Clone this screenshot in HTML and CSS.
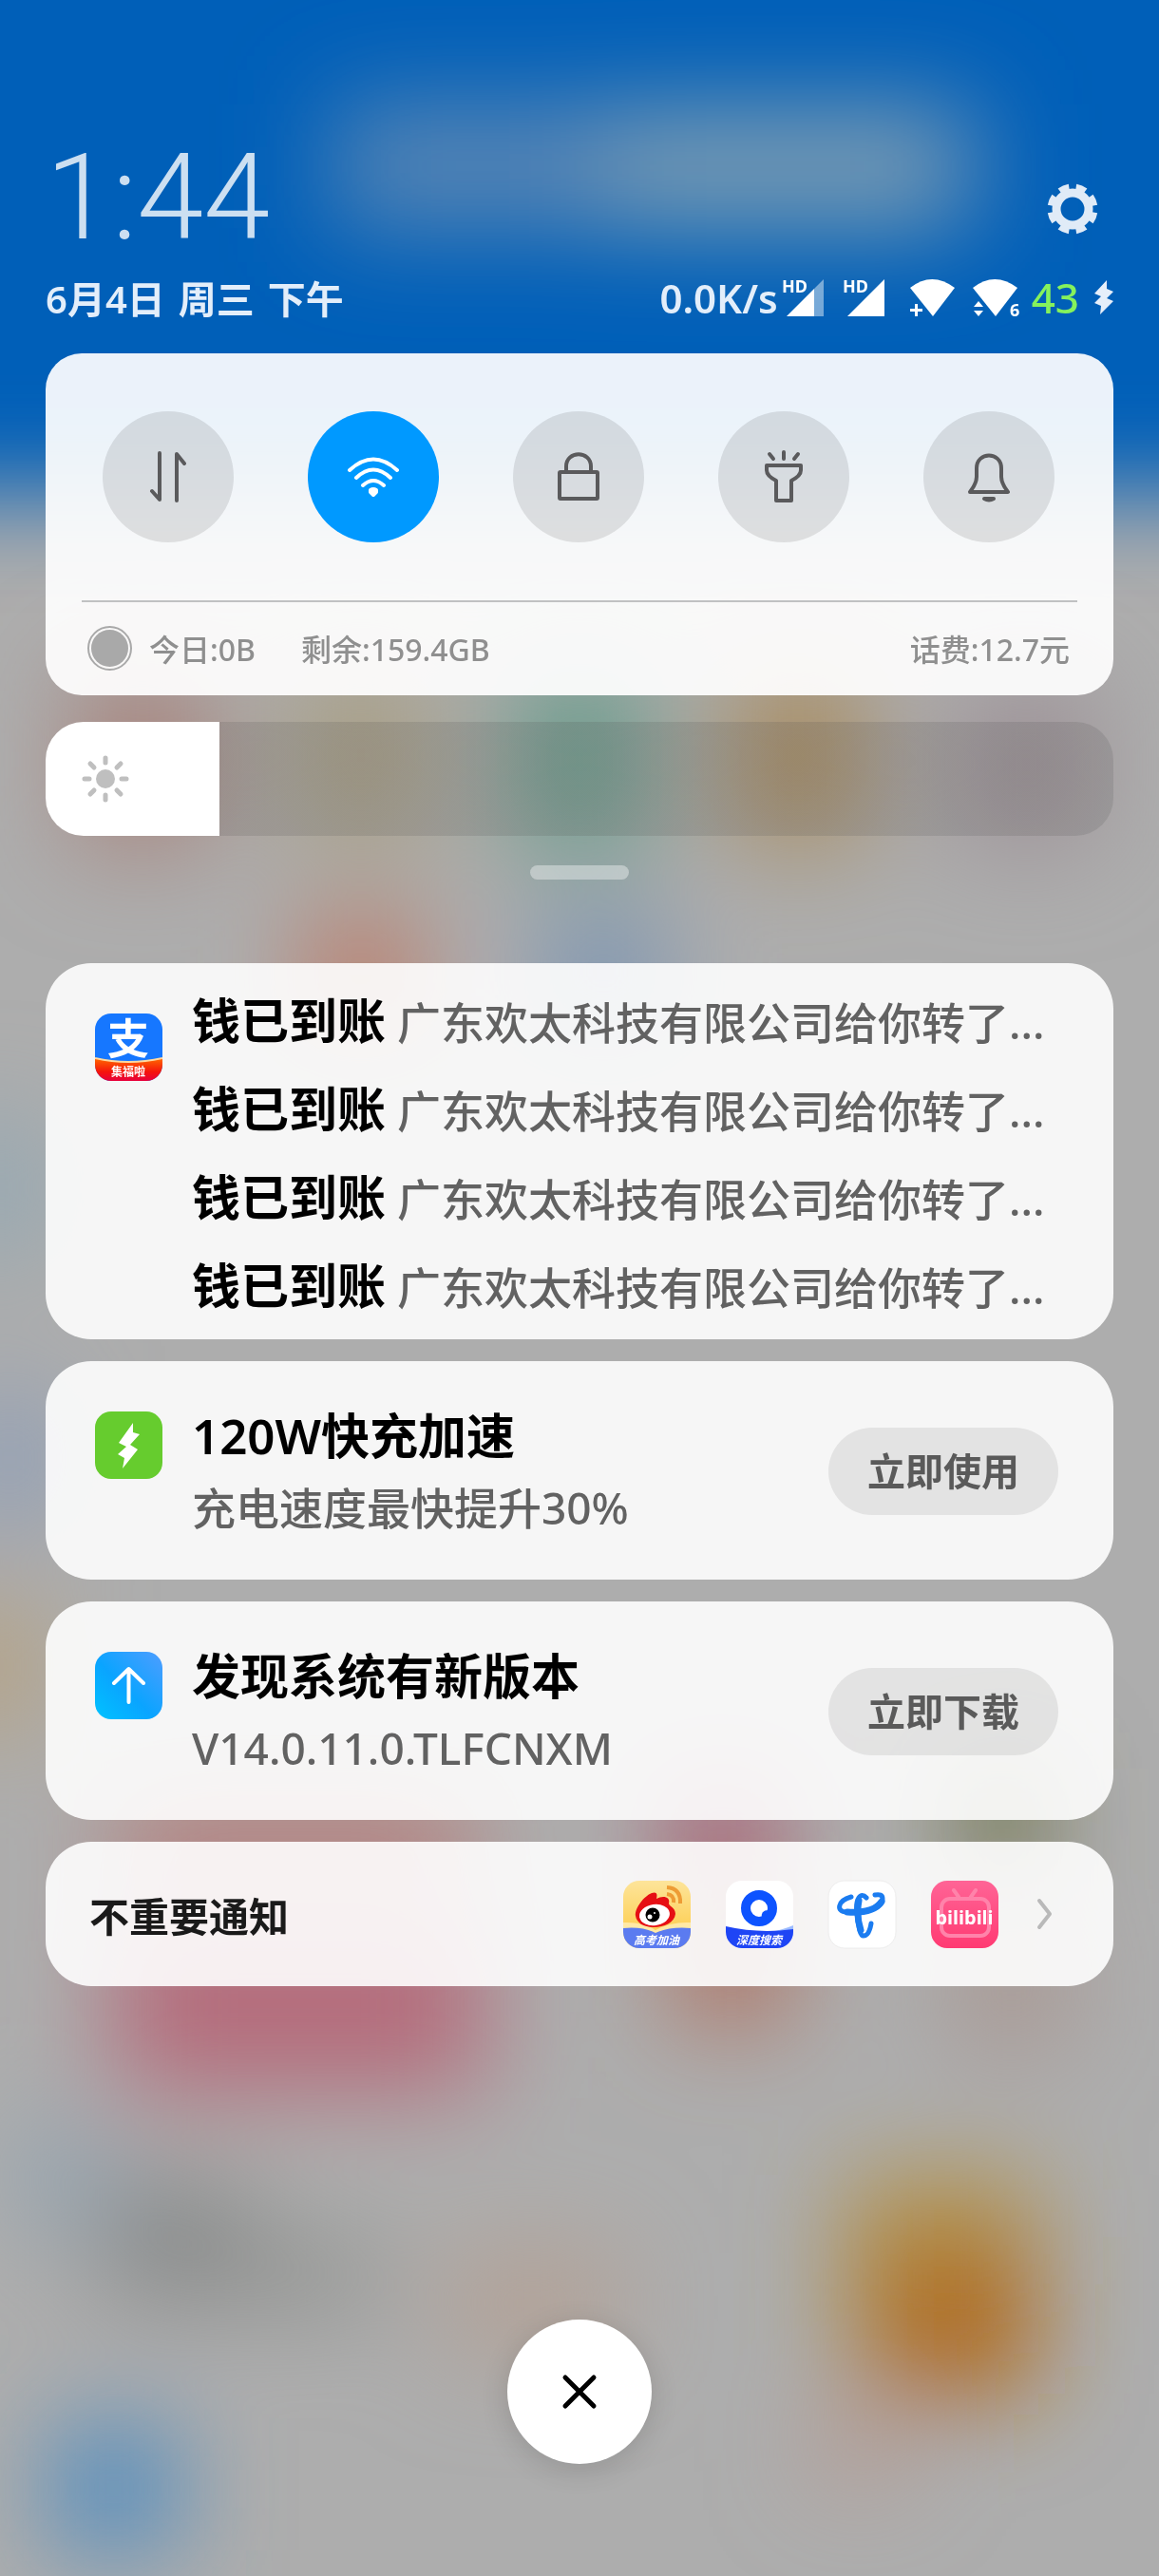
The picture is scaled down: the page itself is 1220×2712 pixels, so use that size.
FILE: index.html
```html
<!DOCTYPE html>
<html lang="zh-CN">
<head>
    <meta charset="UTF-8">
    <meta name="viewport" content="width=device-width, initial-scale=1.0">
    <title>通知中心</title>
    <link rel="stylesheet" href="styles.css">
</head>
<body>
    <!-- blurred wallpaper -->
    <svg class="wallpaper" viewBox="0 0 1220 2712" preserveAspectRatio="none" aria-hidden="true">
        <defs>
            <filter id="soft" x="-20%" y="-20%" width="140%" height="140%"><feGaussianBlur stdDeviation="54"/></filter>
            <filter id="edge" x="-20%" y="-20%" width="140%" height="140%"><feGaussianBlur stdDeviation="52"/></filter>
        </defs>
        <rect width="1220" height="2712" fill="#adadad"/>
        <rect x="-300" y="-300" width="1820" height="820" fill="#005eb8" filter="url(#edge)"/>
        <g filter="url(#soft)">
            <rect x="350" y="110" width="680" height="130" fill="#5c87b4"/>
            <rect x="640" y="120" width="360" height="120" fill="#7f9eb2"/>
            <rect x="80" y="710" width="140" height="180" fill="#a8827a"/>
            <rect x="310" y="700" width="140" height="190" fill="#a99f84"/>
            <rect x="540" y="700" width="140" height="200" fill="#6c9c8c"/>
            <rect x="770" y="700" width="140" height="190" fill="#a98d62"/>
            <rect x="1010" y="720" width="140" height="170" fill="#9c9095"/>
            <rect x="320" y="970" width="120" height="110" fill="#c07660"/>
            <rect x="570" y="970" width="130" height="110" fill="#7592b4"/>
            <rect x="-60" y="1180" width="110" height="140" fill="#93a8b4"/>
            <rect x="-40" y="1470" width="100" height="130" fill="#8c9db8"/>
            <rect x="-60" y="1690" width="100" height="130" fill="#b7a07c"/>
            <rect x="120" y="1900" width="380" height="70" fill="#b8706c"/>
            <rect x="700" y="1880" width="120" height="90" fill="#a8506a"/>
            <rect x="1010" y="1860" width="90" height="110" fill="#666b3c"/>
            <rect x="120" y="2020" width="390" height="180" fill="#b56a7a"/>
            <rect x="710" y="2000" width="120" height="130" fill="#b0705f"/>
            <rect x="1010" y="2040" width="110" height="110" fill="#a8938c"/>
            <rect x="20" y="2240" width="90" height="100" fill="#8fa3b2"/>
            <rect x="110" y="2300" width="150" height="120" fill="#868888"/>
            <rect x="250" y="2360" width="150" height="70" fill="#8f918e"/>
            <rect x="470" y="2370" width="180" height="110" fill="#b3a094"/>
            <rect x="890" y="2290" width="200" height="200" fill="#b2934a"/>
            <rect x="925" y="2370" width="160" height="150" fill="#b06812"/>
            <rect x="860" y="2540" width="90" height="70" fill="#b8978c"/>
            <rect x="55" y="2555" width="130" height="130" fill="#4e8bc0"/>
        </g>
    </svg>

    <main class="shade">
        <header>
            <div class="clock-row">
                <time class="clock">1:44</time>
                <button class="gear" aria-label="设置">
                    <svg width="54" height="54" viewBox="0 0 54 54" fill="none" stroke="currentColor">
                        <circle cx="27" cy="27" r="17" stroke-width="9"/>
                        <circle cx="27" cy="27" r="23" stroke-width="7" pathLength="80" stroke-dasharray="5.8 4.2" stroke-dashoffset="-2.1"/>
                    </svg>
                </button>
            </div>
            <div class="status-row">
                <p class="date"><span>6月4日</span><span>周三</span><span>下午</span></p>
                <div class="status">
                    <span class="speed">0.0K/s</span>
                    <svg class="sim" width="46" height="42" viewBox="0 0 46 42" fill="#fff">
                        <text x="0" y="16">HD</text>
                        <path d="M5 41L34 12V41Z"/>
                        <path d="M34 12L44 2V41H34Z" opacity=".45"/>
                    </svg>
                    <svg class="sim second" width="46" height="42" viewBox="0 0 46 42" fill="#fff">
                        <text x="0" y="16">HD</text>
                        <path d="M5 41L44 2V41Z"/>
                    </svg>
                    <svg class="wifi" width="50" height="42" viewBox="0 0 50 42" fill="#fff">
                        <path d="M1 11Q24 -7 48 11L25 41Z"/>
                        <path d="M1 33H6V28H9V33H14V36H9V41H6V36H1Z"/>
                    </svg>
                    <svg class="wifi second" width="50" height="42" viewBox="0 0 50 42" fill="#fff">
                        <path d="M0 11Q23 -7 47 11L24 41Z"/>
                        <path d="M1 31L6 25L11 31ZM1 35L6 41L11 35Z"/>
                        <text x="39" y="41">6</text>
                    </svg>
                    <span class="battery">43</span>
                    <svg class="bolt" width="20" height="36" viewBox="0 0 20 36" fill="#e6effa">
                        <path d="M13 0L0 14L7 17L0 24L7 27L6 36L20 22L13 19L20 12L13 9Z"/>
                    </svg>
                </div>
            </div>
        </header>

        <section class="controls">
            <div class="toggles">
                <button class="toggle" aria-label="移动数据">
                    <svg width="60" height="60" viewBox="0 0 60 60">
                        <path d="M21 5V54L13 45M39 55V6L47 16" />
                    </svg>
                </button>
                <button class="toggle on" aria-label="WLAN">
                    <svg width="60" height="60" viewBox="0 0 60 60">
                        <path d="M5 23Q30 0 55 23M12 31Q30 14 48 31M19 39Q30 29 41 39"/>
                        <path class="solid" d="M27 44Q30 42 33 44V46L30 49L27 46Z"/>
                    </svg>
                </button>
                <button class="toggle" aria-label="锁屏">
                    <svg width="60" height="60" viewBox="0 0 60 60">
                        <rect x="10" y="25" width="40" height="28" rx="1"/>
                        <path d="M17 25V19C17 2 43 2 43 19V25"/>
                    </svg>
                </button>
                <button class="toggle" aria-label="手电筒">
                    <svg width="60" height="60" viewBox="0 0 60 60">
                        <path d="M12 18H48V23Q48 29 38 34V55H22V34Q12 29 12 23Z"/>
                        <path d="M15 6L19 11M30 4V11M45 6L41 11"/>
                    </svg>
                </button>
                <button class="toggle" aria-label="静音">
                    <svg width="60" height="60" viewBox="0 0 60 60">
                        <path d="M10 46Q17 37 17 30V21C17 3 43 3 43 21V30Q43 37 50 46Z"/>
                        <path class="solid" d="M25 53H35Q30 56 25 53Z"/>
                    </svg>
                </button>
            </div>
            <div class="usage">
                <i class="dot"></i>
                <span>今日:0B</span>
                <span class="left">剩余:159.4GB</span>
                <span class="fee">话费:12.7元</span>
            </div>
        </section>

        <label class="brightness">
            <input type="range" min="0" max="100" value="16" aria-label="亮度">
            <svg width="50" height="50" viewBox="0 0 50 50" stroke="#bfbfbf" stroke-width="5" stroke-linecap="round">
                <circle cx="25" cy="25" r="10" fill="#bfbfbf" stroke="none"/>
                <path d="M25 3V8M25 42V47M3 25H8M42 25H47M9 9L13 13M37 37L41 41M9 41L13 37M37 13L41 9"/>
            </svg>
        </label>
        <div class="handle"></div>

        <section class="notices">
            <article class="card pay">
                <svg class="app" width="71" height="71" viewBox="0 0 71 71">
                    <defs>
                        <linearGradient id="red" x2="0" y2="1"><stop offset="0" stop-color="#ff6a00"/><stop offset=".6" stop-color="#f5140c"/><stop offset="1" stop-color="#e8003c"/></linearGradient>
                        <clipPath id="tile"><rect width="71" height="71" rx="17"/></clipPath>
                    </defs>
                    <g clip-path="url(#tile)">
                        <rect width="71" height="71" fill="#1677ff"/>
                        <path d="M0 47Q35 55 71 47V71H0Z" fill="url(#red)"/>
                        <path d="M0 47Q35 55 71 47" fill="none" stroke="#ffd9a0" stroke-width="2"/>
                    </g>
                    <text class="zhi" x="35" y="43">支</text>
                    <text class="tag small" x="35" y="66">集福啦</text>
                </svg>
                <ul>
                    <li><b>钱已到账</b> 广东欢太科技有限公司给你转了...</li>
                    <li><b>钱已到账</b> 广东欢太科技有限公司给你转了...</li>
                    <li><b>钱已到账</b> 广东欢太科技有限公司给你转了...</li>
                    <li><b>钱已到账</b> 广东欢太科技有限公司给你转了...</li>
                </ul>
            </article>

            <article class="card">
                <svg class="app" width="71" height="71" viewBox="0 0 71 71">
                    <rect width="71" height="71" rx="17" fill="#66cc2e"/>
                    <path d="M40 12L25 33L33 37L24 45L31 49L29 60L45 40L37 35L47 24L40 22Z" fill="#fff"/>
                </svg>
                <div class="text">
                    <h2>120W快充加速</h2>
                    <p>充电速度最快提升30%</p>
                </div>
                <button class="action">立即使用</button>
            </article>

            <article class="card">
                <svg class="app" width="71" height="71" viewBox="0 0 71 71">
                    <defs>
                        <linearGradient id="sky" x1="0" y1="1" x2="1" y2="0"><stop offset="0" stop-color="#00c3ff"/><stop offset=".45" stop-color="#0aa4ff"/><stop offset="1" stop-color="#4f9dff"/></linearGradient>
                    </defs>
                    <rect width="71" height="71" rx="17" fill="url(#sky)"/>
                    <path d="M20 33L35.500 18L51 33M35.500 19V53" fill="none" stroke="#fff" stroke-width="4" stroke-linecap="round" stroke-linejoin="round"/>
                </svg>
                <div class="text">
                    <h2>发现系统有新版本</h2>
                    <p>V14.0.11.0.TLFCNXM</p>
                </div>
                <button class="action">立即下载</button>
            </article>

            <a class="card folded" href="#">
                <span>不重要通知</span>
                <svg width="71" height="71" viewBox="0 0 71 71">
                    <defs>
                        <linearGradient id="gold" x2="0" y2="1"><stop offset="0" stop-color="#fde49a"/><stop offset="1" stop-color="#fdc83c"/></linearGradient>
                    </defs>
                    <g clip-path="url(#tile)">
                        <rect width="71" height="71" fill="url(#gold)"/>
                        <path d="M46 7Q61 8 60 24M46 14Q54 15 53 23" fill="none" stroke="#ee9c35" stroke-width="4"/>
                        <path d="M0 44Q20 43 34 52Q50 43 71 44V71H0Z" fill="#ffe9a6"/>
                        <path d="M13 37C12 29 22 16 30 13C36 11 36 15 35 19C42 15 50 17 48 24C48 27 55 28 55 35C54 44 43 49 32 49C21 49 14 44 13 37Z" fill="#e60f14"/>
                        <ellipse cx="33" cy="36" rx="16" ry="11" fill="#fff" transform="rotate(-8 33 36)"/>
                        <circle cx="31" cy="36" r="7.500" fill="#000"/>
                        <circle cx="28" cy="38" r="2.500" fill="#fff"/>
                        <circle cx="33" cy="34" r="1" fill="#fff"/>
                        <path d="M0 50Q20 48 34 55Q50 48 71 50V71H0Z" fill="#5b7bf0"/>
                    </g>
                    <text class="tag" x="35" y="67">高考加油</text>
                </svg>
                <svg width="71" height="71" viewBox="0 0 71 71">
                    <g clip-path="url(#tile)">
                        <rect width="71" height="71" fill="#fff"/>
                        <circle cx="35" cy="29" r="14" fill="none" stroke="#0d53ff" stroke-width="10"/>
                        <path d="M38 40Q36 31 45 31L42 40Z" fill="#0d53ff"/>
                        <path d="M30 56Q55 54 71 47V60H30Z" fill="#9dbcff"/>
                        <path d="M0 48Q35 56 71 51V71H0Z" fill="#1e45f5"/>
                    </g>
                    <text class="tag" x="35" y="67">深度搜索</text>
                </svg>
                <svg width="71" height="71" viewBox="0 0 71 71">
                    <rect width="71" height="71" rx="17" fill="#fff" stroke="#ececec"/>
                    <g fill="none" stroke="#1b7cf0" stroke-linecap="round">
                        <path d="M24 17C9 21 8 33 19 33C37 34 57 30 57 19C57 15 54 14 49 15" stroke-width="5"/>
                        <path d="M20 33C36 34 50 31 56 22" stroke-width="7"/>
                        <path d="M40 18C34 11 28 19 30 35C32 49 33 58 37 58C42 58 44 51 45 45" stroke-width="5"/>
                        <path d="M32 21Q29 36 34 52" stroke-width="7"/>
                    </g>
                </svg>
                <svg width="71" height="71" viewBox="0 0 71 71">
                    <defs>
                        <linearGradient id="pink" x2="0" y2="1"><stop offset="0" stop-color="#ff6496"/><stop offset="1" stop-color="#ff3a72"/></linearGradient>
                    </defs>
                    <rect width="71" height="71" rx="17" fill="url(#pink)"/>
                    <g fill="none" stroke="#ff83aa" stroke-width="4" stroke-linecap="round">
                        <rect x="11" y="19" width="50" height="39" rx="9"/>
                        <path d="M24 10L29 17M47 10L42 17"/>
                    </g>
                    <text class="bili" x="35" y="46">bilibili</text>
                </svg>
                <svg class="chevron" width="16" height="34" viewBox="0 0 16 34" fill="none" stroke="#b9b9b9" stroke-width="4" stroke-linecap="round" stroke-linejoin="round">
                    <path d="M2 3L13 17L2 31"/>
                </svg>
            </a>
        </section>

        <button class="clear" aria-label="清除全部通知">
            <svg width="40" height="40" viewBox="0 0 40 40" stroke="#000" stroke-width="5" stroke-linecap="round">
                <path d="M5 5L35 35M35 5L5 35"/>
            </svg>
        </button>
    </main>
</body>
</html>
```

FILE: styles.css
```css
* {
    box-sizing: border-box;
}
body {
    margin: 0;
    background: #adadad;
    font-family: "Noto Sans", "Noto Sans CJK SC", sans-serif;
    color: #000;
}
h2, p, ul {
    margin: 0;
    padding: 0;
}
svg {
    display: block;
    flex: none;
    overflow: visible;
}
button {
    padding: 0;
    border: none;
    background: none;
    font-family: inherit;
    cursor: pointer;
}
.wallpaper {
    position: fixed;
    top: 0;
    left: 0;
    width: 100%;
    height: 100%;
    overflow: hidden;
    z-index: -1;
}
.shade {
    display: flex;
    flex-direction: column;
    min-height: 100vh;
    padding: 140px 48px 118px;
}

/* clock and status icons */
.clock-row {
    display: flex;
    justify-content: space-between;
    align-items: center;
    height: 136px;
}
.clock {
    font-family: Roboto, sans-serif;
    font-size: 126px;
    font-weight: 300;
    line-height: 136px;
    color: rgba(255, 255, 255, 0.8);
}
.gear {
    margin: 24px 16px 0 0;
    color: #e0ebf7;
}
.status-row {
    display: flex;
    justify-content: space-between;
    align-items: center;
    height: 74px;
    color: #e3eefa;
}
.date {
    display: flex;
    gap: 14px;
    font-size: 40px;
    font-weight: 600;
}
.status {
    display: flex;
    align-items: center;
}
.speed {
    font-size: 42px;
    font-weight: 600;
    margin-right: 4px;
}
.status text {
    font-size: 18px;
    font-weight: 700;
}
.second {
    margin-left: 18px;
}
.wifi {
    margin-left: 24px;
}
.wifi.second {
    margin-left: 17px;
}
.battery {
    margin: 0 16px 0 12px;
    font-size: 44px;
    font-weight: 500;
    color: #85f25c;
}

/* quick toggles */
.controls {
    padding: 61px 38px 0;
    margin-top: 22px;
    height: 360px;
    border-radius: 38px;
    background: rgba(255, 255, 255, 0.92);
}
.toggles {
    display: flex;
    justify-content: space-between;
    padding: 0 24px 61px 22px;
    border-bottom: 2px solid #c0c1c2;
}
.toggle {
    display: flex;
    align-items: center;
    justify-content: center;
    width: 138px;
    height: 138px;
    border-radius: 50%;
    background: rgba(0, 0, 0, 0.1);
}
.toggle svg {
    fill: none;
    stroke: #5a5a5c;
    stroke-width: 4;
    stroke-linecap: round;
    stroke-linejoin: round;
}
.toggle .solid {
    fill: #5a5a5c;
}
.toggle.on {
    background: #0099ff;
}
.toggle.on svg {
    stroke: #fff;
}
.toggle.on .solid {
    fill: #fff;
}
.usage {
    display: flex;
    align-items: center;
    height: 96px;
    padding: 0 8px 0 6px;
    font-size: 32px;
    font-weight: 500;
    color: #8f8f8f;
}
.dot {
    width: 47px;
    height: 47px;
    margin-right: 18px;
    border: 2px solid #a9a9a9;
    border-radius: 50%;
    background: #a9a9a9 content-box;
    padding: 2px;
}
.left {
    margin-left: 48px;
}
.fee {
    margin-left: auto;
}

/* brightness */
.brightness {
    position: relative;
    display: block;
    height: 120px;
    margin-top: 28px;
}
.brightness input {
    appearance: none;
    display: block;
    width: 100%;
    height: 120px;
    margin: 0;
    border-radius: 40px;
    background: linear-gradient(to right, #fff 16.3%, rgba(80, 80, 80, 0.17) 16.3%);
}
.brightness input::-webkit-slider-thumb {
    appearance: none;
    width: 1px;
    height: 120px;
}
.brightness svg {
    position: absolute;
    left: 38px;
    top: 35px;
}
.handle {
    width: 104px;
    height: 15px;
    margin: 31px auto 88px;
    border-radius: 8px;
    background: rgba(255, 255, 255, 0.38);
}

/* notifications */
.notices {
    display: flex;
    flex-direction: column;
    gap: 23px;
}
.card {
    display: flex;
    align-items: center;
    min-height: 230px;
    padding: 2px 58px 0 52px;
    border-radius: 48px;
    background: rgba(255, 255, 255, 0.89);
}
.app {
    align-self: flex-start;
    margin: 51px 31px 0 0;
}
.text {
    flex: 1;
}
.card h2 {
    font-size: 51px;
    line-height: 76px;
    font-weight: 600;
}
.card p {
    font-size: 46px;
    line-height: 76px;
    font-weight: 500;
    color: #626262;
}
.pay {
    padding: 16px 40px 8px 52px;
}
.pay .app {
    margin-top: 37px;
}
.pay ul {
    flex: 1;
    min-width: 0;
    list-style: none;
}
.pay li {
    height: 93px;
    white-space: nowrap;
    font-size: 46px;
    line-height: 93px;
    font-weight: 500;
    color: #626262;
}
.pay b {
    font-size: 51px;
    line-height: 51px;
    font-weight: 600;
    color: #000;
}
.action {
    width: 242px;
    height: 92px;
    border-radius: 46px;
    background: rgba(0, 0, 0, 0.08);
    font-size: 40px;
    line-height: 88px;
    font-weight: 700;
    color: #5a5a5a;
}
.folded {
    min-height: 152px;
    gap: 37px;
    padding: 0 64px 0 46px;
    color: #1a1a1a;
    text-decoration: none;
}
.folded span {
    flex: 1;
    font-size: 42px;
    font-weight: 600;
}
.chevron {
    margin-left: 4px;
}
.app text, .folded text {
    fill: #fff;
    text-anchor: middle;
}
.zhi {
    font-size: 44px;
    font-weight: 700;
}
.tag {
    font-size: 12px;
    font-weight: 700;
    font-style: italic;
}
.tag.small {
    font-style: normal;
}
.bili {
    font-size: 20px;
    font-weight: 700;
}

/* dismiss all */
.clear {
    display: flex;
    align-items: center;
    justify-content: center;
    width: 152px;
    height: 152px;
    margin: auto auto 0;
    border-radius: 50%;
    background: #fff;
    box-shadow: 0 6px 30px rgba(0, 0, 0, 0.14);
}
```
